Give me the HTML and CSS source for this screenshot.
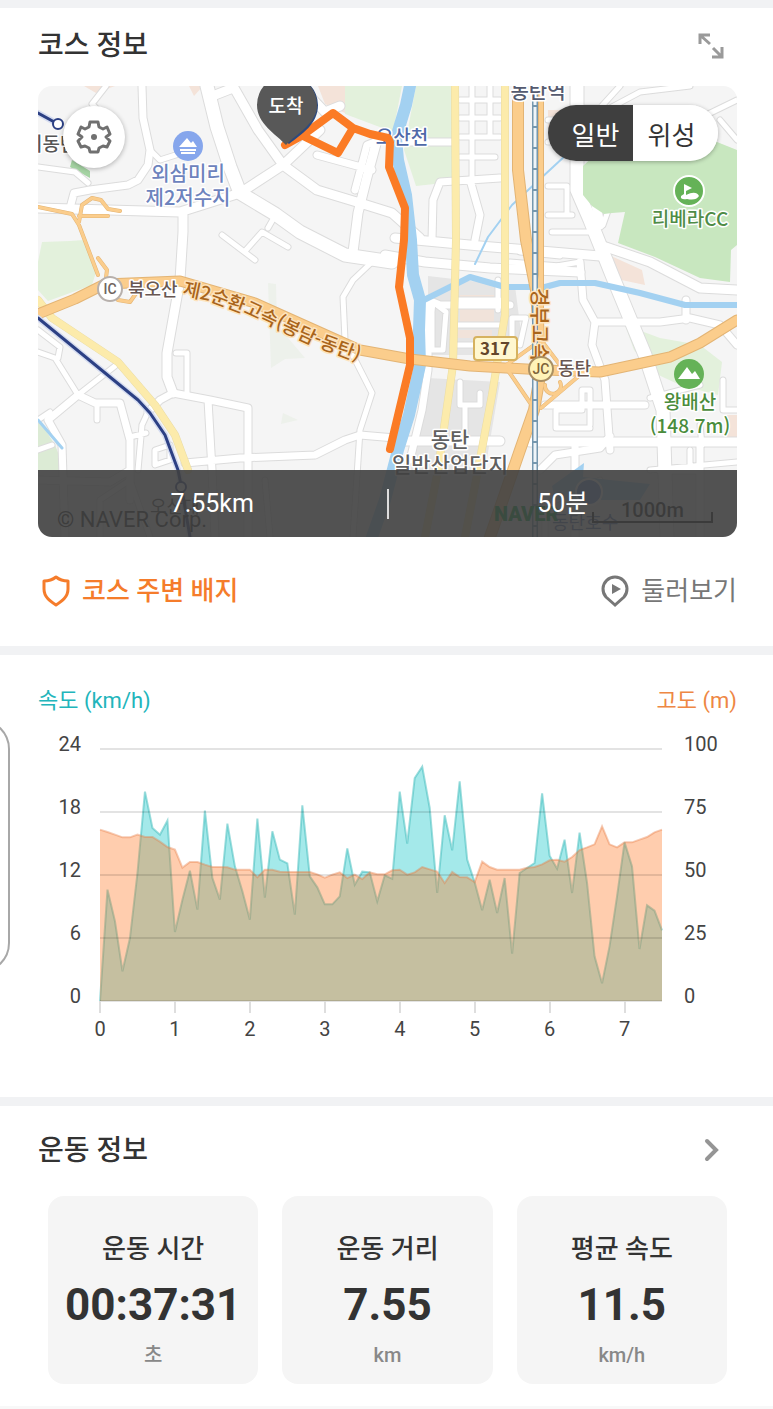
FILE: index.html
```html
<!DOCTYPE html>
<html lang="ko">
<head>
    <meta charset="UTF-8">
    <meta name="viewport" content="width=device-width, initial-scale=1">
    <title>코스 정보</title>
    <link rel="stylesheet" href="styles.css">
</head>
<body>

    <!-- 코스 정보 -->
    <section class="section course">
        <div class="section-head">
            <h2>코스 정보</h2>
            <button class="icon-btn expand-btn" type="button" aria-label="지도 확대">
                <svg width="28" height="28" viewBox="0 0 28 28" fill="none" stroke="#9a9a9a" stroke-width="3">
                    <path d="M3 12V3H13M3 3l10 9"/>
                    <path d="M25 15v10H15M25 25l-9-9"/>
                </svg>
            </button>
        </div>

        <div class="map">
            <svg class="map-canvas" viewBox="38 86 699 451" preserveAspectRatio="xMidYMid slice">
                <defs>
                    <g id="road-s">
                        <path d="M38 167L75 172L88 183M38 330L60 347L58 358M38 352L55 358L78 395L115 366M97 403V420M130 437L146 433M142 425L138 470M148 412L142 425M106 86L92 104L98 110L88 122M150 150L160 160L185 152M222 235L255 260M246 250L262 232L288 247M268 228L276 214M372 262L353 280L343 297L345 340L372 393L360 430L353 537M176 353L187 353V393M460 100H500M460 118H500M460 137H500M460 157H495M472 86V178M490 86V135M548 120H577M548 142H575M548 215H572M548 186H567V215M552 232H590M620 86L600 108L580 108M690 86L640 92L610 108M720 120L737 140M700 118L737 100M603 225L610 205M545 268L580 262M520 252L560 256M510 262L560 266M433 302L446 312L443 350L432 350V312ZM455 300H500M455 325H500M455 345H480M498 280V310M512 318H526L520 345L512 340ZM460 382V405H480V393M465 405V430M582 390H590V425M582 390V410H556V428H590M700 385L650 398M723 380V410H737M700 425L702 445M650 470L737 462M690 450V470M545 537V505L600 480M100 537V500L130 480L150 537M270 537L265 480M38 420L50 412M52 445L38 450M155 450L170 445V460L155 465Z"/>
                    </g>
                    <g id="road-m">
                        <path d="M142 86L143 118L150 150L148 165L138 180L128 185L90 190L74 193L70 208M78 395L48 420L62 445L65 537M78 395L95 403H120L130 440V500M173 393L160 400L148 412M173 393L210 400L248 408V537M208 400L212 470L215 537M185 463L240 458L315 455L345 440L360 435L395 438M317 155L372 170M432 240L433 200L440 182L500 178M470 180L480 215L475 240M580 262L583 300L595 322L592 345L605 380L610 450M595 322L660 322L690 318L720 325L737 345M686 300V320M545 405H645M540 470L555 455L600 448L610 436M660 470H700M428 370L422 410L410 460M428 370V300L440 305H510M400 142H453M575 445V537M700 442V537M38 480L110 482L130 470M355 190L367 145L380 140"/>
                    </g>
                    <g id="road-l">
                        <path d="M183 212V232L180 280L167 353V377L173 393M38 208L180 212L240 193L283 165L320 130M233 86L258 130L283 165L317 190L360 203L392 213L420 238M377 140L367 177L358 213L353 252M385 255L425 262L490 268L580 272M395 238L480 246L600 256M400 441H500M530 442H737M210 97L233 88M300 86L325 112L340 106M600 245L650 262L700 288L737 290M590 175L600 225"/>
                    </g>
                    <g id="road-xl">
                        <path d="M207 86L217 127L230 167L240 193L275 214L300 232L345 255L392 262M577 86V190L590 220L612 275L645 355L663 410L667 537"/>
                    </g>
                </defs>

                <rect x="38" y="86" width="699" height="451" fill="#f5f5f5"/>

                <!-- 녹지와 구역 -->
                <path d="M345 86H402L393 132L345 114ZM416 86H453V182L416 186L404 150Z" fill="#e3f1dc"/>
                <path d="M318 86H345V113L325 104ZM84 86H115L96 93ZM189 86H203L194 96ZM548 110H565V130H548ZM609 255L642 270L645 285L612 278ZM725 415H737V445H727Z" fill="#f4e3d9"/>
                <path d="M42 242L70 241L84 240L96 272L92 285L48 301L38 290V262Z" fill="#e3f1dc"/>
                <path d="M38 418L55 445L65 470H38Z" fill="#dcebd5"/>
                <path d="M268 283L276 284L277 325L305 358L285 359L271 368ZM283 413L298 420L281 424Z" fill="#edf1eb"/>
                <path d="M72 160L90 171V178L70 167Z" fill="#a5d3a3"/>
                <path d="M625 325L660 338L700 345L722 362L718 395L680 385L652 372L634 350Z" fill="#e3f1dc"/>
                <path d="M428 276L515 286L522 340L500 355H428ZM428 378L500 382L485 470H405Z" fill="#e5e5e5"/>
                <path d="M460 295H494V322H460ZM458 330H492V338H458Z" fill="#f1e3da"/>

                <!-- 일반 도로 -->
                <g class="road casing">
                    <use href="#road-s" stroke-width="7"/>
                    <use href="#road-m" stroke-width="9"/>
                    <use href="#road-l" stroke-width="11"/>
                    <use href="#road-xl" stroke-width="15"/>
                </g>
                <g class="road surface">
                    <use href="#road-s" stroke-width="5"/>
                    <use href="#road-m" stroke-width="7"/>
                    <use href="#road-l" stroke-width="9"/>
                    <use href="#road-xl" stroke-width="13"/>
                </g>
                <!-- 산 쪽 녹지는 도로 위로 -->
                <path d="M583 166L600 150L700 140L717 142L737 150V245L731 250L730 282L700 278L655 257L618 243L625 212L612 213L604 214L592 206L583 195Z" fill="#c8e7bf"/>

                <!-- 하천 -->
                <g class="road" stroke="#a3d1f1">
                    <path d="M410 86L406 105L396 138L398 160L406 195L411 240L413 275L420 300L419 330L420 365L409 415L398 450L385 500L372 537" stroke-width="12"/>
                    <path d="M420 302L452 286L470 277L505 287H545L560 283H595L640 293L685 305H737" stroke-width="6"/>
                    <path d="M475 264L488 237L512 205L566 155" stroke-width="2"/>
                    <path d="M38 420L62 448" stroke-width="3"/>
                </g>
                <path d="M552 486L584 463L583 477L610 480L650 484L640 500H555Z" fill="#a3d1f1"/>

                <!-- 간선 도로 -->
                <g class="road" stroke="#e9dca6" stroke-width="8">
                    <path d="M455 86L456 240L453 365L448 400L438 470L425 537M505 86V315L492 395L478 470L465 537"/>
                    <path d="M38 300L52 318L118 362L155 405L175 435L188 470" />
                </g>
                <g class="road" stroke="#fcebab" stroke-width="7">
                    <path d="M455 86L456 240L453 365L448 400L438 470L425 537M505 86V315L492 395L478 470L465 537"/>
                    <path d="M38 300L52 318L118 362L155 405L175 435L188 470"/>
                </g>
                <g class="road" stroke="#e3b474">
                    <path d="M38 314L75 299L105 284L180 281L255 303L360 350L410 359L470 366L545 370L600 372L670 357L700 343L737 320" stroke-width="11"/>
                    <path d="M518 86V170L526 240L536 290L541 370L534 410L520 450L490 537" stroke-width="12"/>
                    <path d="M541 86V370" stroke-width="6"/>
                    <path d="M38 207L72 214L79 225L98 275M79 222L82 205L92 198L101 200L108 209L120 211M79 216H108M98 258L107 270L105 285M118 300L130 302L137 292M505 366L535 410M505 366L541 340L560 365M541 408L580 375M545 385A8 8 0 1 0 560 382" stroke-width="4"/>
                </g>
                <g class="road" stroke="#fbcd8c">
                    <path d="M38 314L75 299L105 284L180 281L255 303L360 350L410 359L470 366L545 370L600 372L670 357L700 343L737 320" stroke-width="9"/>
                    <path d="M518 86V170L526 240L536 290L541 370L534 410L520 450L490 537" stroke-width="10"/>
                    <path d="M541 86V370" stroke-width="4"/>
                    <path d="M38 207L72 214L79 225L98 275M79 222L82 205L92 198L101 200L108 209L120 211M79 216H108M98 258L107 270L105 285M118 300L130 302L137 292M505 366L535 410M505 366L541 340L560 365M541 408L580 375M545 385A8 8 0 1 0 560 382" stroke-width="3"/>
                </g>

                <!-- 철도 -->
                <path d="M535 86V537" stroke="#7597ae" stroke-width="6"/>
                <path d="M535 86V537" stroke="#eff5f9" stroke-width="3" stroke-dasharray="19 2"/>
                <path class="road" d="M38 113L58 124M38 318L138 400L150 413L165 435L178 470L182 490L190 537" stroke="#d5dcf0" stroke-width="6"/>
                <path class="road" d="M38 113L58 124M38 318L138 400L150 413L165 435L178 470L182 490L190 537" stroke="#2c4084" stroke-width="3"/>
                <circle cx="58" cy="124" r="5" fill="#fff" stroke="#2c4084" stroke-width="2"/>
                <circle cx="181" cy="487" r="5" fill="#fff" stroke="#2c4084" stroke-width="2"/>

                <!-- 지명 -->
                <g class="label">
                    <text x="25" y="151" font-size="19" fill="#555">기동탄</text>
                    <text x="188" y="181" class="mid" font-size="20" fill="#6d83bd">외삼미리</text>
                    <text x="188" y="205" class="mid" font-size="20" fill="#6d83bd">제2저수지</text>
                    <text x="402" y="144" class="mid" font-size="19" fill="#4f69a8">오산천</text>
                    <text x="538" y="99" class="mid" font-size="20" fill="#555b70">동탄역</text>
                    <text x="690" y="226" class="mid" font-size="19" fill="#4f8c47">리베라CC</text>
                    <text x="690" y="409" class="mid" font-size="19" fill="#4a8c3c">왕배산</text>
                    <text x="690" y="433" class="mid" font-size="19" fill="#4a8c3c">(148.7m)</text>
                    <text x="128" y="296" font-size="18" fill="#685752">북오산</text>
                    <text x="558" y="375" font-size="18" fill="#685752">동탄</text>
                    <text x="450" y="447" class="mid" font-size="21" fill="#606060">동탄</text>
                    <text x="450" y="472" class="mid" font-size="21" fill="#606060">일반산업단지</text>
                </g>
                <g class="label highway-label">
                    <path id="highway-path" d="M182 295L210 301L250 316L310 344L390 374" fill="none" stroke="none"/>
                    <text font-size="19"><textPath href="#highway-path">제2순환고속(봉담-동탄)</textPath></text>
                    <text transform="translate(532 288) rotate(90)" font-size="20">경부고속</text>
                </g>

                <!-- 지도 기호 -->
                <circle cx="188" cy="146" r="15" fill="#86a6ec"/>
                <path d="M179 147L187 138L191 143L193 141L197 147ZM180 149H196V151H180ZM181 152H195V154H181Z" fill="#fff"/>
                <circle cx="689" cy="191" r="15" fill="#65b257" stroke="#fff" stroke-width="2"/>
                <path d="M684 184L692 188L686 191V195Q696 190 699 196Q696 201 687 199Q680 200 681 196L684 194Z" fill="#fff"/>
                <circle cx="689" cy="374" r="15" fill="#65b257"/>
                <path d="M678 379L687 367L692 374L695 371L700 379Z" fill="#fff"/>
                <circle cx="110" cy="289" r="12" fill="#fff" stroke="#b7b0ac" stroke-width="2"/>
                <text x="110" y="294" class="mid badge-text" font-size="14" fill="#6f6460">IC</text>
                <circle cx="541" cy="369" r="12" fill="#fff3b8" stroke="#a98f63" stroke-width="2"/>
                <text x="541" y="374" class="mid badge-text" font-size="14" fill="#7d6338">JC</text>
                <rect x="474" y="337" width="43" height="23" rx="3" fill="#fff7cf" stroke="#d6b25f" stroke-width="2"/>
                <text x="495" y="355" class="mid bold" font-size="17" fill="#63462b">317</text>

                <g class="map-credit">
                    <text x="57" y="527" font-size="22" fill="#222">© NAVER Corp.</text>
                    <text x="150" y="513" font-size="18" fill="#444">오산대</text>
                    <circle cx="589" cy="492" r="13" fill="#6f9ae0" stroke="#fff" stroke-width="2"/>
                    <text x="552" y="529" font-size="18" fill="#5570aa">동탄호수</text>
                    <text x="494" y="521" font-size="20" fill="#00a83c" font-weight="900">NAVER</text>
                    <text x="621" y="517" font-size="20" fill="#111" font-weight="500">1000m</text>
                    <path d="M593 512V522H712V512" fill="none" stroke="#111" stroke-width="2"/>
                </g>

                <!-- 이동 경로 -->
                <path class="road" d="M285 145L303 135L333 113L353 128L338 153L305 137M353 128L370 134L388 138L390 142L389 167L405 208L404 240L399 287L410 338V365L390 449" stroke="#fb7b25" stroke-width="8"/>
                <path d="M289 144C275 134 260 124 260 105A29 29 0 0 1 318 105C318 124 302 134 289 144Z" fill="#2d4a7e"/>
                <path d="M286 145C276 134 257 124 257 105A30 30 0 0 1 317 105C317 124 296 134 286 145Z" fill="#585858"/>
                <text x="286" y="113" class="mid marker-text" font-size="19">도착</text>
            </svg>

            <button class="gear-btn" type="button" aria-label="지도 설정">
                <svg width="36" height="36" viewBox="0 0 36 36" fill="none" stroke="#707070" stroke-width="3" stroke-linejoin="round">
                    <path d="M14 3H22L23 8L27 10L31 8L34 15L30 18L34 22L31 28L27 27L23 29L22 33H14L13 29L9 27L5 28L2 22L6 18L2 15L5 8L9 10L13 8Z"/>
                    <circle cx="18" cy="18" r="3" fill="#707070" stroke="none"/>
                </svg>
            </button>

            <div class="map-type">
                <button class="type-btn active" type="button">일반</button>
                <button class="type-btn" type="button">위성</button>
            </div>

            <div class="map-summary">
                <span>7.55km</span>
                <span>50분</span>
            </div>
        </div>

        <div class="course-links">
            <a class="course-link badge" href="#">
                <svg width="36" height="36" viewBox="0 0 36 36" fill="none" stroke="#f57c2b" stroke-width="3" stroke-linejoin="round">
                    <path d="M18 4Q23 8 30 8V16C30 24 24 28 18 32C12 28 6 24 6 16V8Q13 8 18 4Z"/>
                </svg>
                코스 주변 배지
            </a>
            <a class="course-link" href="#">
                <svg width="36" height="36" viewBox="0 0 36 36" fill="none" stroke="#777" stroke-width="3">
                    <path d="M18 32L9 24A12 12 0 1 1 27 24Z"/>
                    <path d="M15 11L24 16L15 21Z" fill="#777" stroke="none"/>
                </svg>
                둘러보기
            </a>
        </div>
    </section>

    <!-- 속도 / 고도 그래프 -->
    <section class="section graph">
        <div class="edge-handle"></div>
        <div class="graph-titles">
            <span class="speed-title">속도 (km/h)</span>
            <span class="height-title">고도 (m)</span>
        </div>
        <div class="chart">
            <div class="axis axis-left">
                <span>24</span><span>18</span><span>12</span><span>6</span><span>0</span>
            </div>
            <div class="plot">
                <!-- 가로 1칸 = 0.1km, 세로 756 = 24km/h = 100m -->
                <svg class="plot-canvas" viewBox="0 0 75 756" preserveAspectRatio="none">
                    <polygon class="speed-area" points="0,756 1,422 2,517 3,667 4,567 5,372 6,128 7,237 8,257 9,215 10,549 11,452 12,365 13,482 14,185 15,387 16,452 17,224 18,352 19,427 20,512 21,209 22,446 23,247 24,332 25,343 26,497 27,169 28,382 29,415 30,466 31,466 32,442 33,298 34,407 35,368 36,370 37,457 38,379 39,389 40,128 41,284 42,87 43,53 44,177 45,432 46,199 47,304 48,97 49,332 50,400 51,484 52,392 53,492 54,387 55,614 56,372 57,357 58,342 59,133 60,320 61,359 62,272 63,432 64,251 65,402 66,622 67,703 68,592 69,442 70,280 71,352 72,600 73,469 74,485 75,544 75,756"/>
                    <polyline class="speed-line" points="0,756 1,422 2,517 3,667 4,567 5,372 6,128 7,237 8,257 9,215 10,549 11,452 12,365 13,482 14,185 15,387 16,452 17,224 18,352 19,427 20,512 21,209 22,446 23,247 24,332 25,343 26,497 27,169 28,382 29,415 30,466 31,466 32,442 33,298 34,407 35,368 36,370 37,457 38,379 39,389 40,128 41,284 42,87 43,53 44,177 45,432 46,199 47,304 48,97 49,332 50,400 51,484 52,392 53,492 54,387 55,614 56,372 57,357 58,342 59,133 60,320 61,359 62,272 63,432 64,251 65,402 66,622 67,703 68,592 69,442 70,280 71,352 72,600 73,469 74,485 75,544"/>
                    <polygon class="height-area" points="0,756 0,242 1,249 2,257 3,265 4,265 5,257 6,264 7,264 8,278 9,294 10,302 11,356 12,339 13,339 14,347 15,354 16,354 17,355 18,362 20,362 21,385 22,362 23,362 24,368 25,369 28,369 29,376 30,386 31,377 32,370 33,387 34,377 35,390 36,370 37,376 38,376 39,364 40,362 41,377 42,370 43,354 44,361 45,368 46,402 47,369 48,384 49,385 50,399 51,338 52,354 53,362 56,362 57,356 58,354 59,346 60,334 61,332 62,338 63,324 64,303 65,295 66,286 67,232 68,286 69,295 70,280 71,280 72,272 73,264 74,250 75,242 75,756"/>
                    <polyline class="height-line" points="0,242 1,249 2,257 3,265 4,265 5,257 6,264 7,264 8,278 9,294 10,302 11,356 12,339 13,339 14,347 15,354 16,354 17,355 18,362 20,362 21,385 22,362 23,362 24,368 25,369 28,369 29,376 30,386 31,377 32,370 33,387 34,377 35,390 36,370 37,376 38,376 39,364 40,362 41,377 42,370 43,354 44,361 45,368 46,402 47,369 48,384 49,385 50,399 51,338 52,354 53,362 56,362 57,356 58,354 59,346 60,334 61,332 62,338 63,324 64,303 65,295 66,286 67,232 68,286 69,295 70,280 71,280 72,272 73,264 74,250 75,242"/>
                    <path class="grid-line" d="M0 0H75M0 189H75M0 378H75M0 567H75M0 756H75"/>
                </svg>
                <div class="axis-bottom">
                    <span>0</span><span>1</span><span>2</span><span>3</span><span>4</span><span>5</span><span>6</span><span>7</span>
                </div>
            </div>
            <div class="axis axis-right">
                <span>100</span><span>75</span><span>50</span><span>25</span><span>0</span>
            </div>
        </div>
    </section>

    <!-- 운동 정보 -->
    <section class="section workout">
        <div class="section-head">
            <h2>운동 정보</h2>
            <button class="icon-btn more-btn" type="button" aria-label="운동 정보 더보기">
                <svg width="28" height="28" viewBox="0 0 28 28" fill="none" stroke="#959595" stroke-width="4" stroke-linecap="round">
                    <path d="M8 4L17 13L8 22"/>
                </svg>
            </button>
        </div>
        <div class="cards">
            <div class="card">
                <h3>운동 시간</h3>
                <strong>00:37:31</strong>
                <span>초</span>
            </div>
            <div class="card">
                <h3>운동 거리</h3>
                <strong>7.55</strong>
                <span>km</span>
            </div>
            <div class="card">
                <h3>평균 속도</h3>
                <strong>11.5</strong>
                <span>km/h</span>
            </div>
        </div>
    </section>

</body>
</html>
```
FILE: styles.css
```css
*{
    padding: 0;
    margin: 0;
    box-sizing: border-box;
}
body{
    background-color: #fff;
    color: #333;
    font-family: Roboto, "Noto Sans CJK KR", sans-serif;
}
button{
    border: 0;
    background: none;
    font-family: inherit;
    cursor: pointer;
}
svg{
    display: block;
}
a{
    text-decoration: none;
}

/* 공통 섹션 */
.section{
    padding: 0 36px 0 38px;
    border-top: 9px solid #f1f2f4;
}
.section-head{
    display: flex;
    justify-content: space-between;
    align-items: center;
    height: 72px;
}
h2{
    font-size: 28px;
    line-height: 40px;
    font-weight: 500;
}
.icon-btn{
    width: 28px;
    height: 28px;
    margin-right: 12px;
}
.more-btn{
    margin-right: 10px;
}

/* 지도 */
.course{
    border-top-width: 8px;
    padding-bottom: 36px;
}
.course .section-head{
    height: 78px;
    padding-bottom: 3px;
}
.map{
    position: relative;
    aspect-ratio: 699 / 451;
    border-radius: 14px;
    overflow: hidden;
}
.map-canvas{
    width: 100%;
    height: 100%;
}
.road{
    fill: none;
    stroke-linejoin: round;
    stroke-linecap: round;
}
.casing{
    stroke: #dcdcdc;
}
.surface{
    stroke: #fff;
}
.label{
    font-family: "Noto Sans CJK KR", sans-serif;
    font-weight: 500;
    paint-order: stroke;
    stroke: #fff;
    stroke-width: 3px;
    stroke-linejoin: round;
}
.highway-label{
    fill: #a9651b;
    stroke: #fde3bd;
}
.mid{
    text-anchor: middle;
}
.badge-text{
    font-weight: 500;
}
.bold{
    font-family: "Noto Sans CJK KR", sans-serif;
    font-weight: 700;
}
.marker-text{
    fill: #fff;
    font-weight: 500;
}
.gear-btn{
    position: absolute;
    left: 25px;
    top: 20px;
    width: 62px;
    height: 62px;
    display: flex;
    align-items: center;
    justify-content: center;
    border-radius: 50%;
    background-color: #fff;
    box-shadow: 0 1px 5px rgba(0, 0, 0, 0.3);
}
.map-type{
    position: absolute;
    right: 19px;
    top: 19px;
    display: flex;
    border-radius: 28px;
    overflow: hidden;
    box-shadow: 0 1px 4px rgba(0, 0, 0, 0.3);
}
.type-btn{
    width: 85px;
    height: 56px;
    padding-right: 8px;
    background-color: #fff;
    color: #333;
    font-size: 26px;
}
.type-btn.active{
    padding: 0 0 0 10px;
    background-color: #3f3f3f;
    color: #fff;
}
.map-summary{
    position: absolute;
    left: 0;
    right: 0;
    bottom: 0;
    height: 67px;
    display: flex;
    align-items: center;
    background-color: rgba(64, 64, 64, 0.9);
    color: #fff;
    font-size: 25px;
    line-height: 30px;
}
.map-summary span{
    flex: 1;
    text-align: center;
}
.map-summary span + span{
    border-left: 2px solid #ddd;
}
.course-links{
    display: flex;
    justify-content: space-between;
    padding-top: 35px;
}
.course-link{
    display: flex;
    align-items: center;
    gap: 8px;
    color: #777;
    font-size: 26px;
    line-height: 38px;
}
.course-link.badge{
    color: #f57c2b;
    font-weight: 500;
}

/* 그래프 */
.graph{
    position: relative;
    padding-top: 30px;
    padding-bottom: 58px;
}
.edge-handle{
    position: absolute;
    left: -50px;
    top: 64px;
    width: 60px;
    height: 254px;
    border: 2px solid #a8a8a8;
    border-radius: 30px;
}
.graph-titles{
    display: flex;
    justify-content: space-between;
    font-size: 22px;
    line-height: 32px;
}
.speed-title{
    color: #22b5bb;
}
.height-title{
    color: #ee8744;
}
.chart{
    display: flex;
    align-items: flex-start;
    padding-top: 17px;
    color: #444;
    font-size: 20px;
    line-height: 20px;
}
.axis{
    display: flex;
    flex-direction: column;
    justify-content: space-between;
    height: 272px;
}
.axis-left{
    width: 43px;
    text-align: right;
}
.axis-right{
    width: 53px;
}
.plot{
    flex: 1;
    margin: 15px 22px 0 19px;
}
.plot-canvas{
    width: 100%;
    height: 252px;
    overflow: visible;
}
.plot-canvas *{
    vector-effect: non-scaling-stroke;
}
.grid-line{
    fill: none;
    stroke: rgba(0, 0, 0, 0.11);
    stroke-width: 2px;
}
.speed-area{
    fill: #a4e9ea;
}
.speed-line{
    fill: none;
    stroke: rgba(60, 185, 185, 0.5);
    stroke-width: 2px;
}
.height-area{
    fill: rgba(255, 116, 30, 0.36);
}
.height-line{
    fill: none;
    stroke: rgba(230, 125, 70, 0.4);
    stroke-width: 2px;
}
/* 7.5칸짜리 그래프에 라벨 8개를 눈금 중앙에 맞춤 */
.axis-bottom{
    display: flex;
    margin-left: calc(-100% / 15);
}
.axis-bottom span{
    flex: 1;
    text-align: center;
}
.axis-bottom span::before{
    content: "";
    display: block;
    width: 2px;
    height: 12px;
    margin: 0 auto 6px;
    background-color: #dedede;
}

/* 운동 정보 */
.workout{
    padding-bottom: 22px;
    border-bottom: 3px solid #f8f8f8;
}
.workout .section-head{
    height: 90px;
}
.cards{
    display: grid;
    grid-template-columns: repeat(3, 1fr);
    gap: 24px;
    padding: 0 10px;
}
.card{
    display: flex;
    flex-direction: column;
    align-items: center;
    height: 188px;
    padding-top: 34px;
    border-radius: 16px;
    background-color: #f5f5f5;
}
.card h3{
    font-size: 26px;
    line-height: 38px;
    font-weight: 500;
}
.card strong{
    margin-top: 12px;
    font-size: 44px;
    line-height: 50px;
}
.card span{
    margin-top: 10px;
    color: #888;
    font-size: 20px;
    line-height: 30px;
    font-weight: 500;
}
```
